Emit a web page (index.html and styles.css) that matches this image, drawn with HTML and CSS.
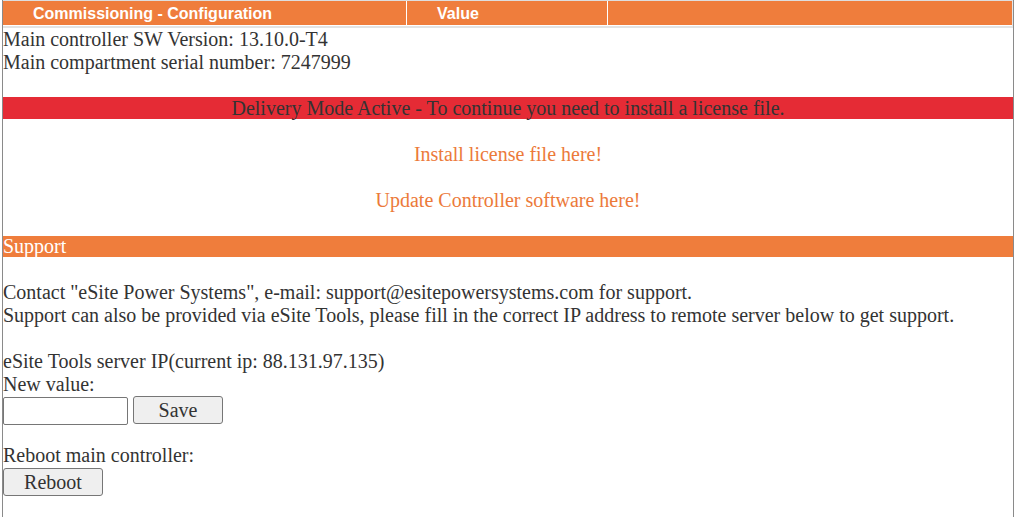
FILE: index.html
```html
<!DOCTYPE html>
<html>
<head>
<meta charset="utf-8">
<link rel="stylesheet" href="styles.css">
</head>
<body>
<div class="frame">
  <div class="hdr">
    <div class="hcell">Commissioning - Configuration</div>
    <div class="hcell">Value</div>
    <div class="hcell"></div>
  </div>
  <div class="info">
    <div>Main controller SW Version: 13.10.0-T4</div>
    <div>Main compartment serial number: 7247999</div>
  </div>
  <div class="alert">Delivery Mode Active - To continue you need to install a license file.</div>
  <div class="links">
    <a class="lnk" href="#">Install license file here!</a>
    <a class="lnk" href="#">Update Controller software here!</a>
  </div>
  <div class="bar">Support</div>
  <div class="support">
    <div>Contact "eSite Power Systems", e-mail: support@esitepowersystems.com for support.</div>
    <div>Support can also be provided via eSite Tools, please fill in the correct IP address to remote server below to get support.</div>
  </div>
  <div class="ipblock">
    <div>eSite Tools server IP(current ip: 88.131.97.135)</div>
    <div>New value:</div>
    <div class="row">
      <input class="txt" type="text">
      <button class="btn save">Save</button>
    </div>
  </div>
  <div class="reboot">
    <div>Reboot main controller:</div>
    <button class="btn rb">Reboot</button>
  </div>
</div>
</body>
</html>
```

FILE: styles.css
```css
html, body {
  margin: 0;
  padding: 0;
  background: #fff;
}
body {
  font-family: "Liberation Serif", "Times New Roman", serif;
  font-size: 20px;
  line-height: 23px;
  color: #333;
}
.frame {
  margin-left: 2px;
  width: 1010px;
  min-height: 517px;
  border-left: 1px solid #8a8a8a;
  border-right: 1px solid #8a8a8a;
}
.hdr {
  display: grid;
  grid-template-columns: 403px 200px 1fr;
  column-gap: 1px;
  background: #fff;
  border-top: 1px solid #dedede;
  border-right: 1px solid #e6e6e6;
  border-bottom: 2px solid #e3e3e3;
  padding-bottom: 1px;
}
.hcell {
  background: #ef7d3c;
  color: #fff;
  font-family: "Liberation Sans", Arial, sans-serif;
  font-weight: bold;
  font-size: 16px;
  height: 24px;
  line-height: 26px;
  padding-left: 30px;
  overflow: hidden;
}
.info {
  height: 69px;
  box-sizing: border-box;
}
.alert {
  background: #e52b35;
  color: #333;
  text-align: center;
  height: 22px;
  line-height: 22px;
}
.links {
  display: flex;
  flex-direction: column;
  align-items: center;
  gap: 23px;
  padding: 24px 0 24px;
}
.lnk {
  color: #ec7a3a;
  text-decoration: none;
}
.bar {
  background: #ef7d3c;
  color: #fff;
  height: 21px;
  line-height: 21px;
}
.support {
  padding-top: 24px;
}
.ipblock {
  padding-top: 23px;
}
.row {
  display: flex;
  gap: 5px;
  margin-top: 1px;
}
.txt {
  box-sizing: border-box;
  width: 125px;
  height: 28px;
  border: 1px solid #767676;
  border-radius: 2px;
  margin: 0;
}
.btn {
  box-sizing: border-box;
  height: 28px;
  font-family: "Liberation Serif", "Times New Roman", serif;
  font-size: 20px;
  line-height: 26px;
  color: #333;
  background: #efefef;
  border: 1px solid #767676;
  border-radius: 3px;
  margin: 0;
  padding: 0;
}
.save {
  width: 90px;
  margin-top: -1px;
}
.reboot {
  padding-top: 19px;
}
.rb {
  width: 100px;
  margin-top: 1px;
  display: block;
}
```
